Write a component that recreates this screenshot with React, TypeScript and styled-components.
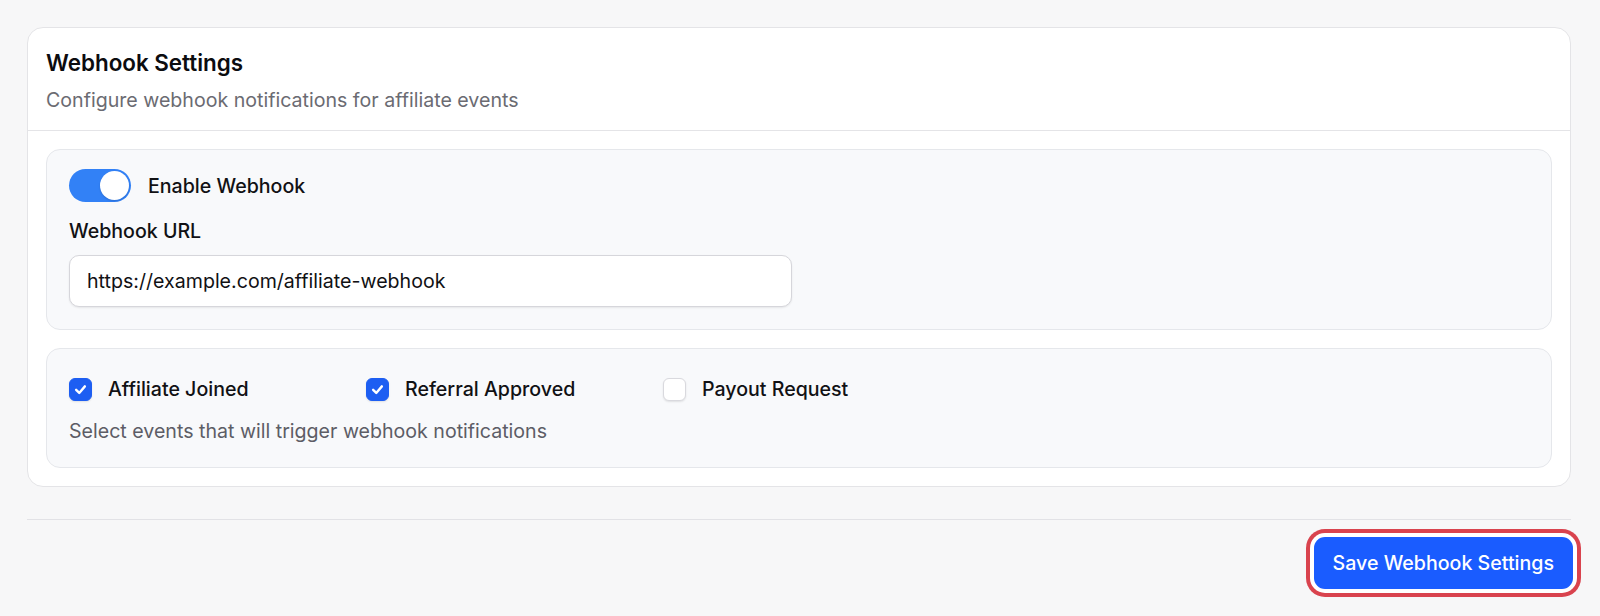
import React, { useState } from "react";
import styled, { createGlobalStyle } from "styled-components";

const Global = createGlobalStyle`
  * { box-sizing: border-box; }
  html, body { margin: 0; padding: 0; background: #f7f7f8; }
  body { font-family: Inter, "Noto Sans", "Liberation Sans", sans-serif; color: #111114; -webkit-font-smoothing: antialiased; }
`;

const Page = styled.div`
  width: 1600px;
  height: 616px;
  padding: 27px 29px 0 27px;
  display: flex;
  flex-direction: column;
`;

const Card = styled.section`
  background: #ffffff;
  border: 1px solid #e4e4e7;
  border-radius: 16px;
  display: flex;
  flex-direction: column;
`;

const CardHeader = styled.header`
  padding: 21px 18px 18px;
  border-bottom: 1px solid #e4e4e7;
  display: flex;
  flex-direction: column;
  gap: 11px;
`;

const Title = styled.h2`
  margin: 0;
  font-size: 22.4px;
  line-height: 28px;
  font-weight: 600;
  color: #0c0c0f;
`;

const Subtitle = styled.p`
  margin: 0;
  font-size: 19.6px;
  line-height: 24px;
  color: #6b6b72;
`;

const CardBody = styled.div`
  padding: 18px 18px 18px;
  display: flex;
  flex-direction: column;
  gap: 18px;
`;

const Panel = styled.div<{ $pad: string }>`
  background: #f8f9fb;
  border: 1px solid #e5e7eb;
  border-radius: 14px;
  padding: ${(p) => p.$pad};
  display: flex;
  flex-direction: column;
`;

const ToggleRow = styled.label`
  display: flex;
  align-items: center;
  gap: 17px;
  cursor: pointer;
`;

const Track = styled.button<{ $on: boolean }>`
  width: 62px;
  height: 33px;
  border-radius: 17px;
  border: none;
  padding: 2px;
  background: ${(p) => (p.$on ? "#3281f6" : "#d4d4d8")};
  display: flex;
  justify-content: ${(p) => (p.$on ? "flex-end" : "flex-start")};
  cursor: pointer;
`;

const Knob = styled.span`
  width: 29px;
  height: 29px;
  border-radius: 50%;
  background: #ffffff;
  box-shadow: 0 1px 2px rgba(0, 0, 0, 0.15);
`;

const Label = styled.span`
  font-size: 19.6px;
  line-height: 24px;
  font-weight: 500;
  color: #111114;
`;

const FieldLabel = styled.div`
  font-size: 19.6px;
  line-height: 24px;
  font-weight: 500;
  color: #111114;
  margin-top: 17px;
`;

const Input = styled.input`
  margin-top: 12px;
  width: 723px;
  height: 52px;
  border: 1px solid #d6d6db;
  border-radius: 10px;
  background: #ffffff;
  padding: 0 17px;
  font-family: inherit;
  font-size: 19.6px;
  color: #111114;
  box-shadow: 0 1px 2px rgba(0, 0, 0, 0.08);
  outline: none;
`;

const EventGrid = styled.div`
  display: grid;
  grid-template-columns: repeat(3, 281px);
  column-gap: 16px;
`;

const CheckItem = styled.label`
  display: flex;
  align-items: center;
  gap: 16px;
  cursor: pointer;
`;

const Box = styled.span<{ $checked: boolean }>`
  width: 23px;
  height: 23px;
  border-radius: 6px;
  display: flex;
  align-items: center;
  justify-content: center;
  background: ${(p) => (p.$checked ? "#1d5ef2" : "#ffffff")};
  border: 1px solid ${(p) => (p.$checked ? "#1d5ef2" : "#d9d9de")};
  box-shadow: 0 1px 2px rgba(0, 0, 0, 0.1);
`;

const Helper = styled.p`
  margin: 18px 0 0;
  font-size: 19.6px;
  line-height: 24px;
  color: #5d5d66;
`;

const Footer = styled.footer`
  margin-top: 32px;
  border-top: 1px solid #e2e2e6;
  padding-top: 17px;
  display: flex;
  justify-content: flex-end;
`;

const SaveButton = styled.button`
  height: 52px;
  padding: 0 19px;
  margin-right: -2px;
  border: none;
  border-radius: 11px;
  background: #1a5cff;
  color: #ffffff;
  font-family: inherit;
  font-size: 19.6px;
  font-weight: 500;
  cursor: pointer;
  box-shadow: 0 0 0 4px #ffffff, 0 0 0 8px #d9434e;
`;

function Check() {
  return (
    <svg width="15" height="15" viewBox="0 0 24 24" fill="none" stroke="#ffffff" strokeWidth="3.8" strokeLinecap="round" strokeLinejoin="round">
      <polyline points="5 12.5 10 17.5 19 7" />
    </svg>
  );
}

const events = [
  { key: "joined", label: "Affiliate Joined" },
  { key: "approved", label: "Referral Approved" },
  { key: "payout", label: "Payout Request" },
];

export default function App() {
  const [enabled, setEnabled] = useState(true);
  const [url, setUrl] = useState("https://example.com/affiliate-webhook");
  const [checked, setChecked] = useState<Record<string, boolean>>({ joined: true, approved: true, payout: false });

  return (
    <>
      <Global />
      <Page>
        <Card>
          <CardHeader>
            <Title>Webhook Settings</Title>
            <Subtitle>Configure webhook notifications for affiliate events</Subtitle>
          </CardHeader>
          <CardBody>
            <Panel $pad="19px 22px 22px">
              <ToggleRow>
                <Track $on={enabled} onClick={() => setEnabled(!enabled)} aria-pressed={enabled}>
                  <Knob />
                </Track>
                <Label>Enable Webhook</Label>
              </ToggleRow>
              <FieldLabel>Webhook URL</FieldLabel>
              <Input value={url} onChange={(e) => setUrl(e.target.value)} />
            </Panel>
            <Panel $pad="28px 22px 24px">
              <EventGrid>
                {events.map((ev) => (
                  <CheckItem key={ev.key} onClick={() => setChecked({ ...checked, [ev.key]: !checked[ev.key] })}>
                    <Box $checked={!!checked[ev.key]}>{checked[ev.key] && <Check />}</Box>
                    <Label>{ev.label}</Label>
                  </CheckItem>
                ))}
              </EventGrid>
              <Helper>Select events that will trigger webhook notifications</Helper>
            </Panel>
          </CardBody>
        </Card>
        <Footer>
          <SaveButton>Save Webhook Settings</SaveButton>
        </Footer>
      </Page>
    </>
  );
}
